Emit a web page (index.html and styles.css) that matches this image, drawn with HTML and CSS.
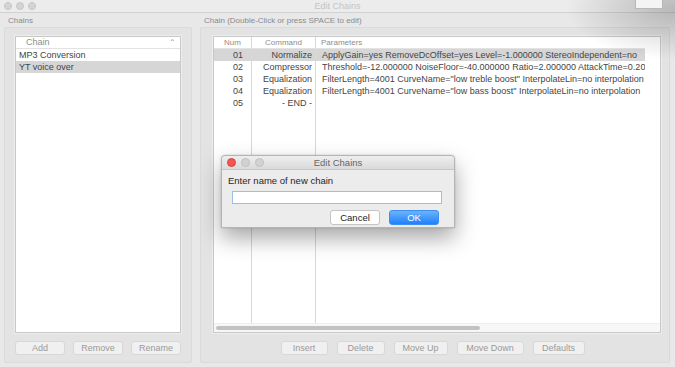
FILE: index.html
```html
<!DOCTYPE html>
<html lang="en">
<head>
    <meta charset="UTF-8">
    <title>Edit Chains</title>
    <link rel="stylesheet" href="styles.css">
</head>
<body>

<div class="window">
    <header class="titlebar">
        <div class="lights">
            <span></span><span></span><span></span>
        </div>
        <div class="title">Edit Chains</div>
    </header>

    <div class="content">
        <section class="panel chains">
            <div class="panel-label">Chains</div>
            <div class="box">
                <div class="list">
                    <div class="list-head">
                        <span>Chain</span>
                        <span class="sort">&#8963;</span>
                    </div>
                    <div class="list-row">MP3 Conversion</div>
                    <div class="list-row selected">YT voice over</div>
                </div>
                <div class="buttons">
                    <button>Add</button>
                    <button>Remove</button>
                    <button>Rename</button>
                </div>
            </div>
        </section>

        <section class="panel chain">
            <div class="panel-label">Chain (Double-Click or press SPACE to edit)</div>
            <div class="box">
                <div class="table-wrap">
                    <div class="table">
                        <div class="th num">Num</div>
                        <div class="th cmd">Command</div>
                        <div class="th params">Parameters</div>

                        <div class="td num sel">01</div>
                        <div class="td cmd sel">Normalize</div>
                        <div class="td params sel">ApplyGain=yes RemoveDcOffset=yes Level=-1.000000 StereoIndependent=no</div>

                        <div class="td num">02</div>
                        <div class="td cmd">Compressor</div>
                        <div class="td params">Threshold=-12.000000 NoiseFloor=-40.000000 Ratio=2.000000 AttackTime=0.200000</div>

                        <div class="td num">03</div>
                        <div class="td cmd">Equalization</div>
                        <div class="td params">FilterLength=4001 CurveName="low treble boost" InterpolateLin=no interpolation</div>

                        <div class="td num">04</div>
                        <div class="td cmd">Equalization</div>
                        <div class="td params">FilterLength=4001 CurveName="low bass boost" InterpolateLin=no interpolation</div>

                        <div class="td num">05</div>
                        <div class="td cmd">- END -</div>
                        <div class="td params"></div>

                        <div class="td num fill"></div>
                        <div class="td cmd fill"></div>
                        <div class="td params fill"></div>
                    </div>
                    <div class="hscroll"><div class="thumb"></div></div>
                </div>
                <div class="buttons right">
                    <button class="b-insert">Insert</button>
                    <button class="b-delete">Delete</button>
                    <button class="b-up">Move Up</button>
                    <button class="b-down">Move Down</button>
                    <button class="b-defaults">Defaults</button>
                </div>
            </div>
        </section>
    </div>

    <div class="corner-shade"></div>
    <div class="corner-box"></div>

    <div class="dialog">
        <div class="dlg-title">
            <div class="lights">
                <span class="red"></span><span></span><span></span>
            </div>
            <div class="title">Edit Chains</div>
        </div>
        <div class="dlg-body">
            <div class="prompt">Enter name of new chain</div>
            <input class="name-input" type="text">
            <div class="dlg-buttons">
                <button class="cancel">Cancel</button>
                <button class="ok">OK</button>
            </div>
        </div>
    </div>
</div>

</body>
</html>
```

FILE: styles.css
```css
body {
    margin: 0;
    font-family: "Liberation Sans", Arial, sans-serif;
    font-size: 9px;
    background: #e6e6e6;
}

.window {
    position: relative;
    width: 675px;
    height: 367px;
    overflow: hidden;
    background: #e8e8e8;
    display: flex;
    flex-direction: column;
}

.titlebar {
    height: 12px;
    border-bottom: 1px solid #d2d2d2;
    background: #ececec;
    display: flex;
    align-items: center;
    position: relative;
}

.lights {
    display: flex;
    gap: 4px;
    padding-left: 4px;
}

.lights span {
    width: 8px;
    height: 8px;
    border-radius: 50%;
    background: #d4d4d4;
    border: 0.5px solid #c6c6c6;
    box-sizing: border-box;
}

.titlebar .title {
    position: absolute;
    left: 0;
    right: 0;
    text-align: center;
    color: #c4c4c4;
    font-size: 9px;
}

.content {
    flex: 1;
    display: flex;
    gap: 8px;
    padding: 3px 5px 4px 4px;
}

.panel {
    display: flex;
    flex-direction: column;
}

.panel.chains {
    width: 188px;
}

.panel.chain {
    flex: 1;
}

.panel-label {
    color: #8a8a8a;
    font-size: 8px;
    height: 11px;
    padding-left: 4px;
}

.box {
    flex: 1;
    background: #e3e3e3;
    border: 1px solid #dadada;
    border-radius: 2px;
    display: flex;
    flex-direction: column;
}

.chains .box {
    padding: 8px 10px 7px 10px;
}

.list {
    flex: 1;
    background: #fff;
    border: 1px solid #c8c8c8;
    box-shadow: 0 0 0 1px #ededed;
}

.list-head {
    height: 11px;
    line-height: 11px;
    border-bottom: 1px solid #e2e2e2;
    color: #8d8d8d;
    padding-left: 10px;
    padding-right: 4px;
    display: flex;
    justify-content: space-between;
}

.list-head .sort {
    font-size: 8px;
    color: #999;
}

.list-row {
    height: 12px;
    line-height: 12px;
    padding-left: 3px;
    color: #444;
}

.list-row.selected {
    background: #d6d6d6;
}

.buttons {
    display: flex;
    gap: 8px;
    margin-top: 8px;
}

.buttons button {
    font-family: "Liberation Sans", Arial, sans-serif;
    font-size: 9px;
    color: #9a9a9a;
    background: #f0f0f0;
    border: 1px solid #d8d8d8;
    border-radius: 3px;
    height: 14px;
    padding: 0;
    flex: 1;
}

.buttons.right {
    justify-content: center;
    gap: 9px;
    padding-right: 9px;
}

.buttons.right button {
    flex: none;
}

.b-insert { width: 47px; }
.b-delete { width: 48px; }
.b-up { width: 54px; }
.b-down { width: 67px; }
.b-defaults { width: 52px; }

.chain .box {
    padding: 8px 8px 7px 12px;
}

.table-wrap {
    flex: 1;
    background: #fff;
    border: 1px solid #c8c8c8;
    box-shadow: 0 0 0 1px #ededed;
    display: flex;
    flex-direction: column;
    padding-right: 15px;
    position: relative;
}

.table {
    flex: 1;
    display: grid;
    grid-template-columns: 38px 64px 1fr;
    grid-template-rows: 12px repeat(5, 12px) 1fr;
    overflow: hidden;
}

.th, .td {
    white-space: nowrap;
    overflow: hidden;
    border-right: 1px solid #d8d8d8;
    line-height: 12px;
}

.th {
    color: #8d8d8d;
    border-bottom: 1px solid #e2e2e2;
    line-height: 11px;
    font-size: 8px;
    text-align: center;
}

.th.params {
    text-align: left;
    padding-left: 5px;
    border-right: none;
}

.td {
    color: #454545;
}

.td.num {
    text-align: right;
    padding-right: 8px;
}

.td.cmd {
    text-align: right;
    padding-right: 3px;
}

.td.params {
    padding-left: 6px;
    border-right: none;
}

.td.sel {
    background: #d6d6d6;
}

.hscroll {
    height: 8px;
    margin-right: -15px;
    border-top: 1px solid #eee;
    background: #f7f7f7;
    display: flex;
    align-items: center;
    padding-left: 2px;
}

.thumb {
    width: 264px;
    height: 4px;
    border-radius: 2px;
    background: #c2c2c2;
}

.corner-shade {
    position: absolute;
    top: 0;
    right: 0;
    width: 110px;
    height: 60px;
    background: radial-gradient(ellipse at 100% 15%, rgba(0, 0, 0, 0.22), rgba(0, 0, 0, 0) 70%);
    pointer-events: none;
}

.corner-box {
    position: absolute;
    top: -1px;
    right: 12px;
    width: 26px;
    height: 8px;
    background: #f4f4f4;
    border: 1px solid #b8b8b8;
}

.dialog {
    position: absolute;
    left: 221px;
    top: 155px;
    width: 232px;
    border: 1px solid #b4b4b4;
    border-radius: 4px 4px 0 0;
    background: #ececec;
    box-shadow: 0 10px 22px rgba(0, 0, 0, 0.35), 0 0 2px rgba(0, 0, 0, 0.2);
    font-family: "Liberation Sans", Arial, sans-serif;
}

.dlg-title {
    height: 13px;
    background: linear-gradient(#eeeeee, #dadada);
    border-bottom: 1px solid #c6c6c6;
    border-radius: 4px 4px 0 0;
    display: flex;
    align-items: center;
    position: relative;
}

.dlg-title .lights {
    padding-left: 5px;
    gap: 5px;
}

.dlg-title .lights span {
    width: 9px;
    height: 9px;
    background: #d2d2d2;
    border-color: #c0c0c0;
}

.dlg-title .lights span.red {
    background: #f4554e;
    border-color: #d9423c;
}

.dlg-title .title {
    position: absolute;
    left: 0;
    right: 0;
    text-align: center;
    color: #666;
    font-size: 9.5px;
}

.dlg-body {
    padding: 5px 15px 2px 6px;
    display: flex;
    flex-direction: column;
}

.prompt {
    color: #262626;
    font-size: 9.5px;
    height: 12px;
}

.name-input {
    margin: 4px 0 0 4px;
    height: 13px;
    box-sizing: border-box;
    border: 1px solid #9dbde2;
    background: #fff;
    width: 210px;
}

.dlg-buttons {
    display: flex;
    justify-content: flex-end;
    gap: 9px;
    margin-top: 6px;
}

.dlg-buttons button {
    font-family: "Liberation Sans", Arial, sans-serif;
    font-size: 9.5px;
    width: 50px;
    height: 15px;
    border-radius: 3px;
    padding: 0;
}

.dlg-buttons .cancel {
    background: #fff;
    border: 1px solid #c4c4c4;
    color: #222;
}

.dlg-buttons .ok {
    background: linear-gradient(#6db3fb, #1c82fb);
    border: 1px solid #3c8ef0;
    color: #fff;
}
```
